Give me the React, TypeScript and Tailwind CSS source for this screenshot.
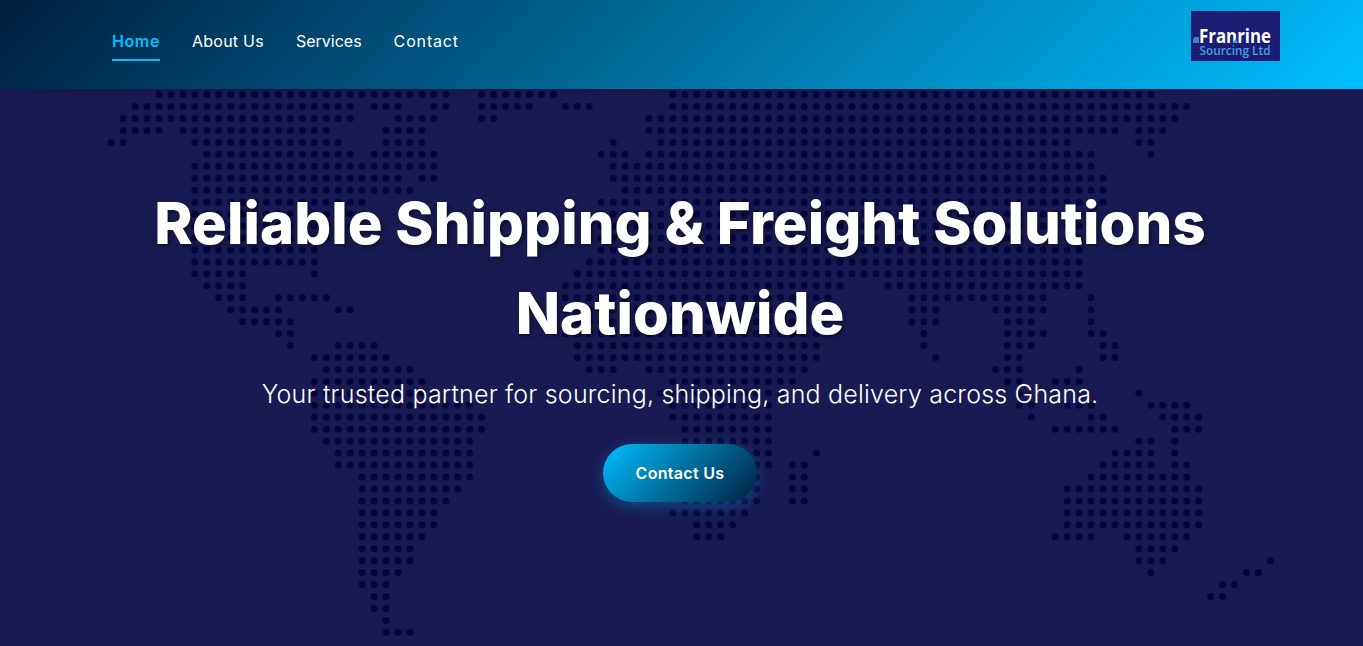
const ROWS: number[][] = [
  [156, 447, 479, 555, 672, 1155],
  [134, 360, 372, 400, 425, 449, 479, 533, 564, 590, 665, 1190],
  [121, 351, 395, 434, 479, 505, 646, 1179],
  [121, 163, 182, 330, 386, 425, 646, 1118, 1137, 1163],
  [108, 124, 193, 343, 384, 431, 609, 616, 657, 1074, 1137, 1155],
  [197, 353, 371, 436, 598, 627, 646, 1094, 1146, 1155],
  [193, 436, 611, 1102],
  [193, 401, 420, 444, 611, 1105],
  [193, 412, 622, 1107],
  [193, 373, 598, 637, 660, 1105],
  [193, 365, 598, 1100],
  [193, 355, 595, 1095],
  [193, 340, 592, 1085],
  [193, 321, 590, 1081],
  [193, 318, 585, 1081],
  [193, 254, 312, 319, 575, 1081],
  [204, 245, 562, 843, 885, 1087],
  [217, 245, 277, 330, 562, 835, 909, 1046, 1089, 1094],
  [228, 282, 336, 353, 564, 830, 909, 946, 985, 1048, 1089, 1094],
  [241, 295, 564, 825, 909, 937, 1004, 1041, 1089, 1094],
  [277, 295, 564, 822, 915, 933, 1004, 1046, 1089, 1105],
  [288, 295, 327, 377, 566, 819, 920, 933, 1007, 1041, 1102, 1115],
  [304, 390, 575, 819, 924, 939, 1007, 1030, 1100, 1115],
  [323, 412, 588, 616, 646, 808, 994, 1024, 1074, 1089],
  [314, 423, 661, 798, 1007, 1024, 1055, 1083],
  [312, 440, 659, 785, 1012, 1030, 1135, 1144],
  [312, 470, 661, 769, 1017, 1035, 1063, 1100, 1146, 1190],
  [308, 486, 670, 771, 1028, 1041, 1089, 1105, 1161, 1200],
  [312, 486, 673, 769, 1052, 1118, 1172, 1203],
  [323, 481, 675, 780, 1137, 1155, 1172, 1179],
  [327, 470, 675, 780, 806, 819, 1111, 1153, 1172, 1185],
  [336, 470, 675, 774, 791, 815, 1100, 1155, 1172, 1187],
  [351, 470, 675, 760, 791, 808, 1089, 1190],
  [353, 462, 675, 760, 789, 808, 1065, 1200],
  [358, 447, 675, 758, 789, 806, 1057, 1203],
  [358, 438, 672, 750, 1057, 1203],
  [358, 436, 687, 737, 1057, 1200],
  [358, 425, 693, 730, 1055, 1094, 1124, 1190],
  [358, 420, 1129, 1179],
  [358, 414, 1137, 1166, 1259, 1275],
  [358, 401, 1146, 1155, 1244, 1261],
  [362, 397, 1222, 1240],
  [363, 390, 1209, 1224],
  [371, 397],
  [375, 397],
  [386, 412],
];

const PITCH = 11.95;

function WorldMap() {
  const dots: { x: number; y: number }[] = [];
  ROWS.forEach((ranges, j) => {
    for (let i = 0; i < ranges.length; i += 2) {
      for (let k = -12; k < 100; k++) {
        const x = 159 + PITCH * k;
        if (x >= ranges[i] && x <= ranges[i + 1]) dots.push({ x, y: 5.6 + PITCH * j });
      }
    }
  });
  return (
    <svg className="absolute top-0 left-0" width="1363" height="557" viewBox="0 0 1363 557">
      {dots.map((d, i) => (
        <circle key={i} cx={d.x} cy={d.y} r="3.5" fill="#06063f" />
      ))}
    </svg>
  );
}

function Logo() {
  return (
    <svg width="89" height="50" viewBox="0 0 89 50" className="block">
      <defs>
        <pattern id="logo-dots" width="3" height="3" patternUnits="userSpaceOnUse">
          <rect width="3" height="3" fill="#1a1a72" />
          <circle cx="1.5" cy="1.5" r="0.7" fill="#25257c" />
        </pattern>
      </defs>
      <rect width="89" height="50" fill="url(#logo-dots)" />
      <path d="M2 32v-3q0-3 3-3h3v6z" fill="#3b7fc4" />
      <text x="8" y="32" fontFamily="'Open Sans', sans-serif" fontWeight="700" fontSize="19" fill="#fff" textLength="72" lengthAdjust="spacingAndGlyphs">
        Franrine
      </text>
      <path d="M44.5 28l-2.5 4h5z" fill="#3aa0e0" />
      <text x="8.5" y="44" fontFamily="'Open Sans', sans-serif" fontWeight="600" fontSize="12.5" fill="#3ea2e2" textLength="71" lengthAdjust="spacingAndGlyphs">
        Sourcing Ltd
      </text>
    </svg>
  );
}

export default function App() {
  return (
    <div className="h-[646px] overflow-hidden bg-[#1a1a52] font-['Inter',sans-serif]">
      <header className="relative z-10 flex h-[89px] items-start justify-between bg-[linear-gradient(135deg,#001f3f,#00bfff)] pl-[112px] pr-[83px] shadow-[0_2px_4px_rgba(0,0,0,0.1)]">
        <nav className="flex gap-8 pt-[26px] text-[16px] text-white">
          <a href="#" className="h-[35px] border-b-2 border-[#00bfff] leading-[30px] font-semibold tracking-[0.6px] text-[#00bfff]">
            Home
          </a>
          <a href="#" className="leading-[30px] tracking-[0.25px]">About Us</a>
          <a href="#" className="leading-[30px]">Services</a>
          <a href="#" className="leading-[30px] tracking-[0.85px]">Contact</a>
        </nav>
        <a href="#" className="mt-[11px] block">
          <Logo />
        </a>
      </header>

      <section className="relative h-[557px] overflow-hidden">
        <WorldMap />
        <div className="relative flex flex-col items-center pt-[89px] pr-[3px] text-center text-white">
          <h1 className="max-w-[1100px] text-[58px] leading-[90px] font-extrabold tracking-[0.06px] [text-shadow:2px_2px_4px_rgba(0,0,0,0.5)]">
            Reliable Shipping &amp; Freight Solutions Nationwide
          </h1>
          <p className="mt-[17px] text-[25px] leading-[38px] font-light tracking-[0.2px]">
            Your trusted partner for sourcing, shipping, and delivery across Ghana.
          </p>
          <a
            href="#"
            className="mt-[31px] flex h-[58px] w-[154px] items-center justify-center rounded-[30px] bg-[linear-gradient(135deg,#00bfff,#001f3f)] text-[16px] font-semibold tracking-[0.3px] text-white shadow-[0_4px_15px_rgba(0,191,255,0.3)]"
          >
            Contact Us
          </a>
        </div>
      </section>
    </div>
  );
}
